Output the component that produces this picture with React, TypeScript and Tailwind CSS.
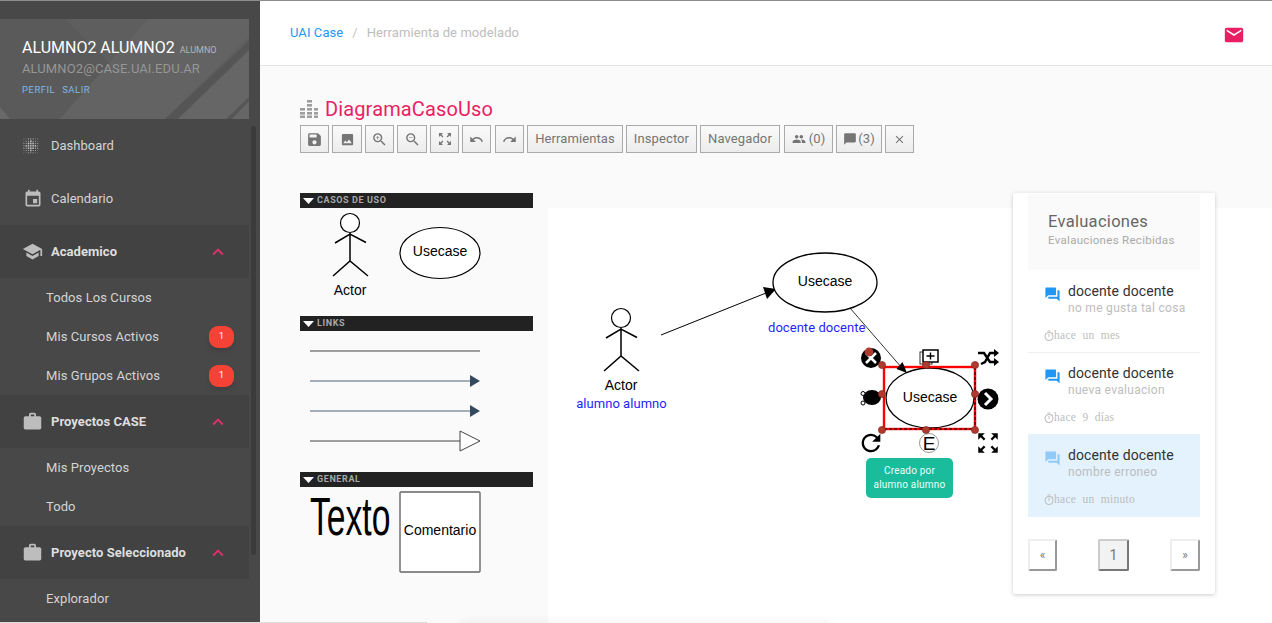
import type { ReactNode } from "react";
import {
  MdChatBubble,
  MdClose,
  MdEmail,
  MdEvent,
  MdImage,
  MdKeyboardArrowUp,
  MdOutlineTimer,
  MdPeople,
  MdQuestionAnswer,
  MdRedo,
  MdRefresh,
  MdSave,
  MdSchool,
  MdUndo,
  MdWork,
  MdZoomIn,
  MdZoomOut,
  MdZoomOutMap,
} from "react-icons/md";

const DotsIcon = () => (
  <svg width="16" height="16" viewBox="0 0 18 18" fill="#bdbdbd">
    {[1, 3.6, 6.2, 8.8, 11.4, 14, 16.6].map((x) =>
      [1, 3.6, 6.2, 8.8, 11.4, 14, 16.6].map((y) => {
        const d = Math.abs(x - 8.8) + Math.abs(y - 8.8);
        return <circle key={`${x}-${y}`} cx={x} cy={y} r={d < 6 ? 1 : 0.6} opacity={d > 11 ? 0.4 : 1} />;
      }),
    )}
  </svg>
);

const EqualizerIcon = () => (
  <svg width="18" height="18" viewBox="0 0 18 18" fill="#9e9e9e">
    {[
      [7, 0],
      [7, 4],
      [0, 8],
      [7, 8],
      [14, 8],
      [0, 12],
      [7, 12],
      [14, 12],
      [0, 15.5],
      [7, 15.5],
      [14, 15.5],
    ].map(([x, y]) => (
      <rect key={`${x}-${y}`} x={x} y={y} width="5" height="2.6" />
    ))}
  </svg>
);

const SubItem = ({ label, badge }: { label: string; badge?: boolean }) => (
  <div className="flex h-[39px] items-center justify-between pl-[46px] pr-[15px] text-[13px] tracking-[0.08px] text-[#d4d4d4]">
    <span>{label}</span>
    {badge ? (
      <span className="flex h-[22px] w-[25px] items-center justify-center rounded-[9px] bg-[#f44336] text-[9.5px] text-white shadow-md">
        1
      </span>
    ) : null}
  </div>
);

const NavItem = ({ icon, label }: { icon: ReactNode; label: string }) => (
  <div className="flex h-[53px] items-center pl-[23px] text-[13px] text-[#d4d4d4]">
    <span className="flex w-[28px] items-center text-[#bdbdbd]">{icon}</span>
    {label}
  </div>
);

const NavGroup = ({ icon, label }: { icon: ReactNode; label: string }) => (
  <div className="flex h-[53px] items-center bg-[#424242] pl-[22px] pr-[20px] text-[13px] font-bold tracking-[0.05px] text-[#dedede]">
    <span className="flex w-[29px] items-center text-[#bdbdbd]">{icon}</span>
    <span className="flex-1">{label}</span>
    <MdKeyboardArrowUp size={22} className="text-[#e0306c]" />
  </div>
);

const Sidebar = () => (
  <aside className="relative h-full w-[260px] shrink-0 overflow-hidden bg-[#484848] pt-[19px]">
    <div className="w-[249px]">
      <div className="relative h-[100px] overflow-hidden bg-[#5e5e5e] pl-[22px] pt-[19px]">
        <svg className="absolute left-0 top-0" width="249" height="100" viewBox="0 0 249 100">
          <polygon points="0,0 65,0 165,100 0,100" fill="#5a5a5a" />
          <polygon points="148,0 249,0 249,18 165,100 60,100" fill="#636363" />
          <polygon points="165,100 249,22 249,30 178,100" fill="#555555" />
          <polygon points="178,100 249,32 249,100" fill="#666666" />
          <polygon points="226,100 249,78 249,82 232,100" fill="#565656" />
          <polygon points="0,88 10,100 0,100" fill="#696969" />
        </svg>
        <div className="relative">
          <div className="flex items-baseline gap-[5px] text-[16px] leading-[20px] text-white">
            ALUMNO2 ALUMNO2 <span className="text-[9px] text-[#b5b5b5]">ALUMNO</span>
          </div>
          <div className="text-[13px] leading-[18px] tracking-[0.1px] text-[#969696]">ALUMNO2@CASE.UAI.EDU.AR</div>
          <div className="mt-[6px] flex gap-[7px] text-[9.5px] leading-[12px] tracking-[0.5px] text-[#7db8ea]">
            <span>PERFIL</span>
            <span>SALIR</span>
          </div>
        </div>
      </div>
      <NavItem icon={<DotsIcon />} label="Dashboard" />
      <NavItem icon={<MdEvent size={20} />} label="Calendario" />
      <NavGroup icon={<MdSchool size={21} />} label="Academico" />
      <SubItem label="Todos Los Cursos" />
      <SubItem label="Mis Cursos Activos" badge />
      <SubItem label="Mis Grupos Activos" badge />
      <NavGroup icon={<MdWork size={21} />} label="Proyectos CASE" />
      <SubItem label="Mis Proyectos" />
      <SubItem label="Todo" />
      <NavGroup icon={<MdWork size={21} />} label="Proyecto Seleccionado" />
      <SubItem label="Explorador" />
    </div>
    <div className="absolute left-[251px] top-[126px] h-[429px] w-[5px] rounded bg-[#3b3b3b]" />
  </aside>
);

const toolButton =
  "flex h-[28px] items-center justify-center border border-[#aaaaaa] bg-gradient-to-b from-[#fafafa] to-[#ececec] text-[13px] tracking-[0.1px] text-[#757575]";

const IconBtn = ({ children, w = "w-[29px]" }: { children: ReactNode; w?: string }) => (
  <button className={`${toolButton} ${w}`}>{children}</button>
);

const Toolbar = () => (
  <div className="mt-[3px] flex items-center gap-[3px] pl-[40px]">
    <IconBtn><MdSave size={17} /></IconBtn>
    <IconBtn w="w-[30px]"><MdImage size={15} /></IconBtn>
    <IconBtn><MdZoomIn size={17} /></IconBtn>
    <IconBtn w="w-[30px]"><MdZoomOut size={17} /></IconBtn>
    <IconBtn><MdZoomOutMap size={16} /></IconBtn>
    <IconBtn><MdUndo size={15} /></IconBtn>
    <IconBtn w="w-[29px] ml-[1px]"><MdRedo size={15} /></IconBtn>
    <IconBtn w="w-[96px]">Herramientas</IconBtn>
    <IconBtn w="w-[71px]">Inspector</IconBtn>
    <IconBtn w="w-[80px]">Navegador</IconBtn>
    <IconBtn w="w-[49px] ml-[1px] gap-[3px]"><MdPeople size={14} />(0)</IconBtn>
    <IconBtn w="w-[46px] gap-[1px]"><MdChatBubble size={14} />(3)</IconBtn>
    <IconBtn w="w-[29px]"><MdClose size={13} /></IconBtn>
  </div>
);

const StencilBar = ({ label }: { label: string }) => (
  <div className="flex h-[15px] items-center bg-[#222222] pl-[3px] text-[9px] font-bold tracking-[0.6px] text-[#a8a8a8]">
    <svg width="11" height="6" viewBox="0 0 11 6" className="mr-[3px]">
      <polygon points="0,0 11,0 5.5,6" fill="#ffffff" />
    </svg>
    <span className="pt-px">{label}</span>
  </div>
);

const Actor = ({ x, y }: { x: number; y: number }) => (
  <g transform={`translate(${x} ${y})`} fill="none" stroke="#000000" strokeWidth="1.5">
    <circle cx="0" cy="0" r="9.5" fill="#ffffff" strokeWidth="1.2" />
    <path d="M0 10V38M-15 20L0 11L16 19.5M-17 53L0 38L18 53" />
  </g>
);

const labelFont = { fontFamily: "'Liberation Sans', Arial, sans-serif", fontSize: 14 };

const Stencil = () => (
  <div className="w-[233px] shrink-0">
    <StencilBar label="CASOS DE USO" />
    <svg width="233" height="108" viewBox="300 208 233 108" className="block">
      <Actor x={350} y={223} />
      <text x="350" y="295" textAnchor="middle" style={labelFont}>Actor</text>
      <ellipse cx="440" cy="253" rx="40" ry="25.5" fill="#ffffff" stroke="#000000" strokeWidth="1.2" />
      <text x="440" y="256" textAnchor="middle" style={labelFont}>Usecase</text>
    </svg>
    <StencilBar label="LINKS" />
    <svg width="233" height="141" viewBox="300 331 233 141" className="block">
      <path d="M310 351H480" stroke="#7f7f7f" strokeWidth="1.6" />
      <path d="M310 381H472" stroke="#8795a3" strokeWidth="1.6" />
      <polygon points="470,375 480,381 470,387" fill="#34495e" />
      <path d="M310 411H472" stroke="#8795a3" strokeWidth="1.6" />
      <polygon points="470,405 480,411 470,417" fill="#34495e" />
      <path d="M310 441H460" stroke="#7f7f7f" strokeWidth="1.6" />
      <polygon points="460,431 480,441 460,451" fill="#ffffff" stroke="#444444" />
    </svg>
    <StencilBar label="GENERAL" />
    <svg width="233" height="100" viewBox="300 487 233 100" className="block">
      <text transform="translate(310 535) scale(0.635 1)" style={{ ...labelFont, fontSize: 53 }}>Texto</text>
      <rect x="400" y="492" width="80" height="80" rx="1" fill="#ffffff" stroke="#666666" strokeWidth="1.4" />
      <text x="440" y="535" textAnchor="middle" style={labelFont}>Comentario</text>
    </svg>
  </div>
);

const handles = [
  [882, 365],
  [926, 365],
  [975, 365],
  [882, 394],
  [975, 394],
  [882, 430],
  [926, 430],
  [975, 430],
];

const blueLabel = { fontFamily: "Roboto, sans-serif", fontSize: 13, fill: "#1f1fff", letterSpacing: 0.05 };

const Canvas = () => (
  <div className="relative h-[415px] flex-1 bg-white">
    <svg width="724" height="415" viewBox="548 208 724 415" className="block">
      <Actor x={621} y={318} />
      <text x="621" y="390" textAnchor="middle" style={labelFont}>Actor</text>
      <text x="621.5" y="408" textAnchor="middle" style={blueLabel}>alumno alumno</text>

      <path d="M661 335L766 293" stroke="#000000" />
      <polygon points="776,289 763,287 767,299" fill="#000000" />
      <ellipse cx="825" cy="282.5" rx="52" ry="29.5" fill="#ffffff" stroke="#000000" strokeWidth="1.3" />
      <text x="825" y="286" textAnchor="middle" style={labelFont}>Usecase</text>
      <text x="768" y="332" style={blueLabel}>docente docente</text>
      <path d="M850 308L902 368" stroke="#000000" strokeWidth="0.8" />

      <ellipse cx="930" cy="398" rx="44" ry="30" fill="#ffffff" stroke="#000000" strokeWidth="1.3" />
      <text x="930" y="402" textAnchor="middle" style={labelFont}>Usecase</text>
      <rect x="884" y="367" width="91" height="62" fill="none" stroke="#ff0000" strokeWidth="2.4" />
      <path d="M975 367V429H884" fill="none" stroke="#000000" strokeWidth="1" strokeDasharray="3 2" />
      <polygon points="907,373 896.5,369 902.5,362" fill="#000000" />

      <circle cx="871" cy="358" r="10" fill="#000000" />
      <path d="M866 353L876 363M876 353L866 363" stroke="#ffffff" strokeWidth="2.6" />
      <circle cx="869" cy="352" r="4.4" fill="#b03a2e" />

      <rect x="920" y="352" width="12" height="12" fill="#ffffff" stroke="#333333" />
      <rect x="923" y="350" width="15" height="12" fill="#ffffff" stroke="#000000" strokeWidth="1.5" />
      <path d="M926.5 356H934.5M930.5 352.5V359.5" stroke="#000000" strokeWidth="1.4" />

      <path d="M978 353H984L990 362H995M981 364L985 362L990 353H995" fill="none" stroke="#000000" strokeWidth="2.4" />
      <polygon points="994,349 999,353 994,357" fill="#000000" />
      <polygon points="994,358 999,362 994,366" fill="#000000" />

      <circle cx="988" cy="399" r="10.5" fill="#000000" />
      <path d="M985 393L991 399L985 405" fill="none" stroke="#ffffff" strokeWidth="3" />

      <ellipse cx="872" cy="397.5" rx="9" ry="7.5" fill="#000000" />
      <circle cx="863" cy="393.5" r="2" fill="#ffffff" stroke="#000000" />
      <circle cx="863" cy="403" r="2" fill="#ffffff" stroke="#000000" />
      <circle cx="879" cy="396" r="2" fill="#000000" />

      <MdRefresh x="857" y="429" size="28" color="#000000" />
      <circle cx="929" cy="443" r="9.5" fill="#ffffff" stroke="#999999" />
      <text x="929" y="450" textAnchor="middle" style={{ ...labelFont, fontSize: 19 }}>E</text>
      <MdZoomOutMap x="975" y="430" size="26" color="#000000" />

      {handles.map(([x, y]) => (
        <circle key={`${x}-${y}`} cx={x} cy={y} r="3.6" fill="#b03a2e" stroke="#7b241c" strokeWidth="0.6" />
      ))}
    </svg>
    <div className="absolute left-[318px] top-[250px] flex h-[40px] w-[87px] items-center justify-center rounded-[5px] bg-[#1abc9c] text-center text-[10px] leading-[14px] tracking-[0.2px] text-[#eafff9]">
      Creado por
      <br />
      alumno alumno
    </div>
  </div>
);

const Evaluation = ({ text, time, box, active }: { text: string; time: string; box: string; active?: boolean }) => (
  <div className={`px-[16px] ${box}`}>
    <div className="flex">
      <MdQuestionAnswer size={17} className={`mr-[7px] mt-[3px] shrink-0 ${active ? "text-[#90caf9]" : "text-[#2196f3]"}`} />
      <div className="whitespace-nowrap">
        <div className="text-[14px] leading-[17px] tracking-[0.1px] text-[#333333]">docente docente</div>
        <div className="text-[12px] leading-[17px] tracking-[0.3px] text-[#bdbdbd]">{text}</div>
      </div>
    </div>
    <div className="mt-[10px] flex items-center text-[11.5px] text-[#bdbdbd] [word-spacing:3px]">
      <MdOutlineTimer size={12} className="-ml-px -mr-px" />
      <span className="font-['Liberation_Serif',serif] tracking-[0.3px]">{time}</span>
    </div>
  </div>
);

const pageButton =
  "flex h-[32px] items-center justify-center rounded-[2px] border-2 text-[#777777]";
const pageEdge = "border-t-[#eeeeee] border-l-[#eeeeee] border-r-[#999999] border-b-[#999999]";

const EvaluationsCard = () => (
  <div className="absolute left-[753px] top-[193px] h-[401px] w-[202px] rounded-[2px] bg-white px-[15px] shadow-[0_1px_4px_rgba(0,0,0,0.2)]">
    <div className="mt-px h-[76px] bg-[#fafafa] px-[20px] pt-[18px]">
      <div className="text-[16.5px] leading-[20px] tracking-[0.3px] text-[#666666]">Evaluaciones</div>
      <div className="mt-px text-[11.5px] leading-[15px] tracking-[0.3px] text-[#a9a9a9]">Evalauciones Recibidas</div>
    </div>
    <Evaluation text="no me gusta tal cosa" time="hace un mes" box="h-[83px] border-b border-[#eeeeee] pt-[13px]" />
    <Evaluation text="nueva evaluacion" time="hace 9 días" box="h-[81px] pt-[12px]" />
    <Evaluation text="nombre erroneo" time="hace un minuto" box="h-[83px] bg-[#e3f2fd] pt-[13px]" active />
    <div className="mt-[22px] flex justify-between">
      <button className={`${pageButton} ${pageEdge} w-[29px] text-[12px]`}>«</button>
      <button className={`${pageButton} w-[31px] border-t-[#cccccc] border-l-[#cccccc] border-r-[#777777] border-b-[#777777] bg-[#f2f2f2] text-[14px]`}>1</button>
      <button className={`${pageButton} ${pageEdge} w-[30px] text-[12px]`}>»</button>
    </div>
  </div>
);

const App = () => {
  return (
    <div className="relative flex h-[623px] w-[1272px] overflow-hidden bg-[#fafafa] font-[Roboto,sans-serif]">
      <Sidebar />
      <main className="relative min-w-0 flex-1">
        <header className="flex h-[66px] items-center justify-between border-b border-[#e4e4e4] bg-white pl-[30px] pr-[27px] text-[13px] tracking-[0.08px]">
          <div className="flex items-center">
            <span className="text-[#2196f3]">UAI Case</span>
            <span className="mx-[9px] text-[#c4c4c4]">/</span>
            <span className="text-[#bdbdbd]">Herramienta de modelado</span>
          </div>
          <MdEmail size={22} className="mt-[4px] text-[#e91e63]" />
        </header>
        <div className="flex items-center gap-[7px] pl-[40px] pt-[30px]">
          <EqualizerIcon />
          <h1 className="text-[20px] leading-[26px] tracking-[0.13px] text-[#e91e63]">DiagramaCasoUso</h1>
        </div>
        <Toolbar />
        <div className="mt-[40px] flex pl-[40px]">
          <Stencil />
          <div className="w-[15px] shrink-0" />
          <div className="mt-[15px] flex flex-1">
            <Canvas />
          </div>
        </div>
        <EvaluationsCard />
        <div className="absolute -bottom-[6px] left-[200px] h-[6px] w-[370px] shadow-[0_-2px_8px_rgba(0,0,0,0.06)]" />
      </main>
      <div className="absolute left-0 top-0 h-px w-full bg-[#8c8c8c]" />
      <div className="absolute bottom-0 left-0 h-px w-[427px] bg-[#dddddd]" />
    </div>
  );
};

export default App;
